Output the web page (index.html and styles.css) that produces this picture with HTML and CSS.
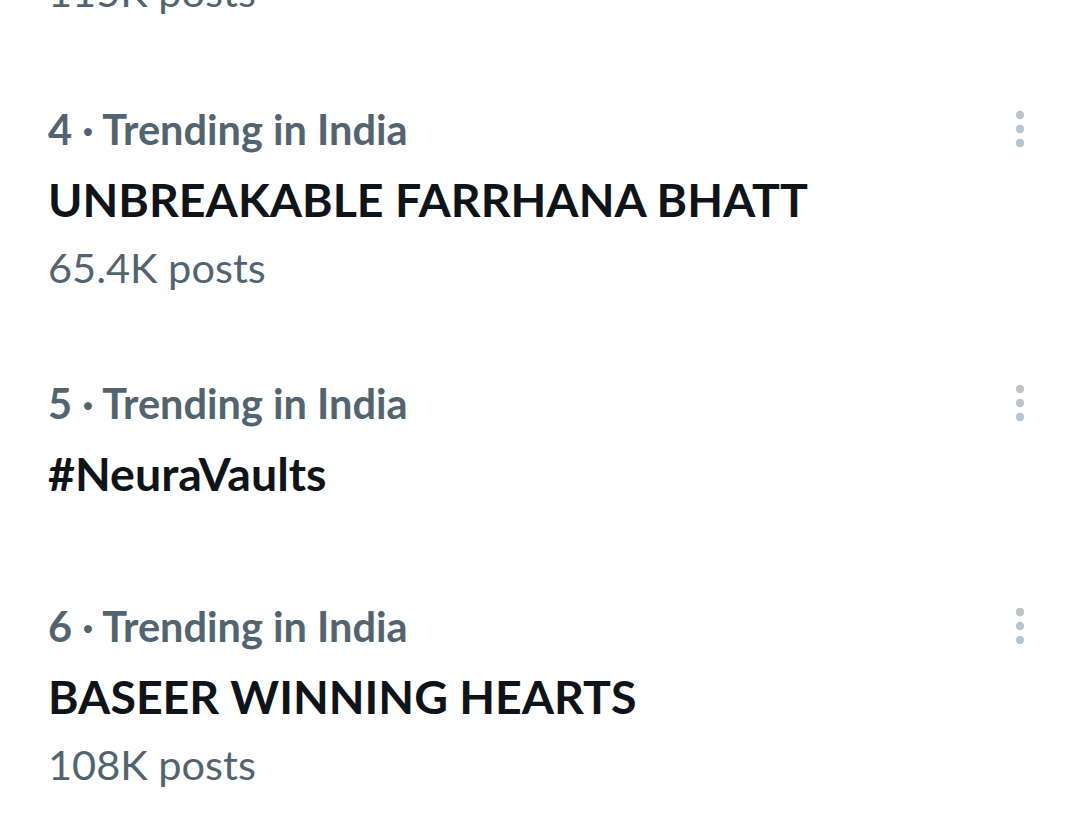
FILE: index.html
```html
<!DOCTYPE html>
<html lang="en">
<head>
<meta charset="utf-8">
<title>Trending</title>
<link rel="stylesheet" href="styles.css">
</head>
<body>
<div class="list">
  <div class="clip"><div class="posts">115K posts</div></div>

  <div class="trend">
    <div class="text">
      <div class="cat">4 · Trending in India</div>
      <div class="title">UNBREAKABLE FARRHANA BHATT</div>
      <div class="posts">65.4K posts</div>
    </div>
    <div class="more">
      <svg width="10" height="38" viewBox="0 0 10 38"><circle cx="5" cy="5" r="4.2"/><circle cx="5" cy="19" r="4.2"/><circle cx="5" cy="33" r="4.2"/></svg>
    </div>
  </div>

  <div class="trend">
    <div class="text">
      <div class="cat">5 · Trending in India</div>
      <div class="title">#NeuraVaults</div>
    </div>
    <div class="more">
      <svg width="10" height="38" viewBox="0 0 10 38"><circle cx="5" cy="5" r="4.2"/><circle cx="5" cy="19" r="4.2"/><circle cx="5" cy="33" r="4.2"/></svg>
    </div>
  </div>

  <div class="trend trend-after-short">
    <div class="text">
      <div class="cat">6 · Trending in India</div>
      <div class="title">BASEER WINNING HEARTS</div>
      <div class="posts">108K posts</div>
    </div>
    <div class="more">
      <svg width="10" height="38" viewBox="0 0 10 38"><circle cx="5" cy="5" r="4.2"/><circle cx="5" cy="19" r="4.2"/><circle cx="5" cy="33" r="4.2"/></svg>
    </div>
  </div>
</div>
</body>
</html>
```

FILE: styles.css
```css
html, body {
  margin: 0;
  padding: 0;
  background: #ffffff;
}
body {
  width: 1080px;
  height: 819px;
  overflow: hidden;
  font-family: Lato, "Liberation Sans", sans-serif;
}
.list {
  padding: 0 55px 0 48px;
}
.clip {
  height: 24px;
  overflow: hidden;
  display: flex;
  align-items: flex-end;
}
.trend {
  display: flex;
  align-items: flex-start;
  margin-top: 70px;
}
.trend + .trend {
  margin-top: 68px;
}
.trend.trend-after-short {
  margin-top: 83px;
}
.text {
  flex: 1;
}
.cat {
  height: 70px;
  line-height: 70px;
  font-size: 41.5px;
  font-weight: 700;
  color: #536471;
}
.title {
  height: 70px;
  line-height: 70px;
  font-size: 46.5px;
  font-weight: 700;
  color: #0f1419;
}
.posts {
  height: 66px;
  line-height: 66px;
  flex: none;
  font-size: 41.5px;
  font-weight: 400;
  color: #536471;
}
.more {
  height: 70px;
  display: flex;
  align-items: center;
}
.more svg {
  display: block;
  fill: #b9c4cc;
}
```
